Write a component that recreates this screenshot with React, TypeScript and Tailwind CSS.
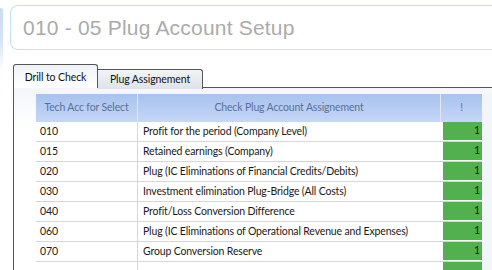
import React from "react";

const rows = [
  ["010", "Profit for the period (Company Level)"],
  ["015", "Retained earnings (Company)"],
  ["020", "Plug (IC Eliminations of Financial Credits/Debits)"],
  ["030", "Investment elimination Plug-Bridge (All Costs)"],
  ["040", "Profit/Loss Conversion Difference"],
  ["060", "Plug (IC Eliminations of Operational Revenue and Expenses)"],
  ["070", "Group Conversion Reserve"],
  ["", ""],
];

export default function App() {
  return (
    <div className="relative w-[492px] h-[270px] overflow-hidden bg-white" style={{ fontFamily: 'Lato, sans-serif' }}>
      <div className="absolute left-0 top-[8px] w-[3px] h-[64px] rounded-r-[2px] bg-gradient-to-b from-[#c9dcf3] via-[#d5e4f6] to-[#ffffff]" />
      <div className="ml-[10px] mt-[5px] h-[45px] rounded-l-[8px] border border-r-0 border-[#bfe5f1] flex items-center pl-[12px]">
        <span className="text-[21px] text-[#ababab] whitespace-nowrap tracking-[0.2px]" style={{ fontFamily: '"Liberation Sans", sans-serif' }}>
          010 - 05 Plug Account Setup
        </span>
      </div>
      <div className="ml-[13px] mt-[14px] flex items-end h-[24px]">
        <div className="relative z-10 w-[85px] h-[24px] border border-b-0 border-[#555] rounded-t-[3px] bg-gradient-to-b from-[#eef3f8] to-[#ffffff] flex items-start justify-center pt-[5px] text-[10.5px] tracking-[-0.1px] text-[#111] whitespace-nowrap">
          Drill to Check
        </div>
        <div className="w-[105px] h-[20px] border border-b-0 border-l-0 border-[#555] rounded-tr-[3px] bg-gradient-to-b from-[#f2f4f6] to-[#dde3e8] flex items-center justify-center text-[10.5px] tracking-[-0.1px] text-[#111] mb-[-1px] whitespace-nowrap">
          Plug Assignement
        </div>
      </div>
      <div className="ml-[13px] -mt-[1px] border-l border-t border-[#555] h-[200px] bg-gradient-to-b from-[#f3f6fa] to-[#ffffff] to-[40px] pl-[22px] pt-[6px] flex">
        <div className="w-[446px] text-[10.5px] tracking-[-0.15px]">
          <div className="flex h-[28px] bg-gradient-to-b from-[#a8c2ee] to-[#c6d7f6] text-[#5b6f98] whitespace-nowrap">
            <div className="w-[102px] flex items-center justify-center border-r border-[#dfe7f5]">Tech Acc for Select</div>
            <div className="w-[303px] flex items-center justify-center border-r border-[#dfe7f5]">Check Plug Account Assignement</div>
            <div className="w-[41px] flex items-center justify-center">!</div>
          </div>
          {rows.map(([a, b], i) => (
            <div key={i} className="flex h-[20px] bg-white text-[#1a1a1a] border-b border-[#d6d6d6] whitespace-nowrap">
              <div className="w-[102px] pl-[4px] flex items-center border-r border-[#d6d6d6]">{a}</div>
              <div className="w-[303px] pl-[5px] flex items-center">{b}</div>
              <div className="w-[41px] pl-[2px] flex">
                <div className="flex-1 bg-[#52b04e] flex items-center justify-end pr-[2px] border-b border-white">{a ? "1" : ""}</div>
              </div>
            </div>
          ))}
        </div>
        <div className="flex-1 bg-[#f3f6f9]" />
      </div>
    </div>
  );
}
